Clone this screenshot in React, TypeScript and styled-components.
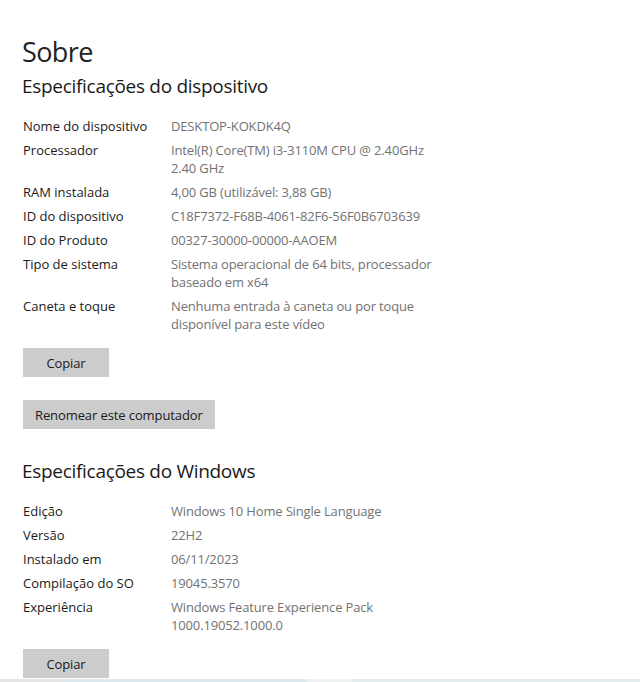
import * as React from "react";
import styled, { createGlobalStyle } from "styled-components";

const GlobalStyle = createGlobalStyle`
    html, body {
        margin: 0;
        padding: 0;
        background: #fff;
    }
    body {
        font-family: "Open Sans", "Noto Sans", "Liberation Sans", sans-serif;
        color: #1a1a1a;
    }
`;

const Page = styled.div`
    height: 682px;
    display: flex;
    flex-direction: column;
    overflow: hidden;
`;

const Content = styled.main`
    flex: 1;
    padding: 34px 0 0 22px;
`;

const Title = styled.h1`
    margin: 0;
    font-size: 27px;
    line-height: 36px;
    font-weight: 400;
    letter-spacing: -0.6px;
    color: #222;
`;

const SectionTitle = styled.h2<{ spacing: number }>`
    margin: ${props => props.spacing}px 0 0;
    font-size: 19px;
    line-height: 28px;
    font-weight: 400;
    letter-spacing: -0.3px;
    color: #1a1a1a;
`;

const SpecList = styled.dl`
    display: grid;
    grid-template-columns: 148px 1fr;
    row-gap: 6px;
    margin: 17px 0 0 1px;
    font-size: 13px;
    line-height: 18px;
`;

const Label = styled.dt`
    margin: 0;
    color: #1a1a1a;
`;

const Value = styled.dd`
    margin: 0;
    color: #727272;
    letter-spacing: -0.15px;
    max-width: 270px;
`;

const Button = styled.button<{ spacing: number }>`
    display: block;
    min-width: 86px;
    height: 29px;
    margin: ${props => props.spacing}px 0 0 1px;
    padding: 0 12px;
    border: none;
    background: #cccccc;
    color: #1a1a1a;
    font-family: inherit;
    font-size: 13px;
    letter-spacing: -0.1px;
    cursor: pointer;
`;

const Taskbar = styled.div`
    height: 3px;
    background: linear-gradient(90deg, #e4e6e6 0 10%, #dde9ec 10% 48%, #eef2f2 48% 55%, #e3ecee 55% 100%);
`;

type Spec = { label: string; value: string[] };

const device: Spec[] = [
    { label: "Nome do dispositivo", value: ["DESKTOP-KOKDK4Q"] },
    { label: "Processador", value: ["Intel(R) Core(TM) i3-3110M CPU @ 2.40GHz", "2.40 GHz"] },
    { label: "RAM instalada", value: ["4,00 GB (utilizável: 3,88 GB)"] },
    { label: "ID do dispositivo", value: ["C18F7372-F68B-4061-82F6-56F0B6703639"] },
    { label: "ID do Produto", value: ["00327-30000-00000-AAOEM"] },
    { label: "Tipo de sistema", value: ["Sistema operacional de 64 bits, processador", "baseado em x64"] },
    { label: "Caneta e toque", value: ["Nenhuma entrada à caneta ou por toque", "disponível para este vídeo"] },
];

const windows: Spec[] = [
    { label: "Edição", value: ["Windows 10 Home Single Language"] },
    { label: "Versão", value: ["22H2"] },
    { label: "Instalado em", value: ["06/11/2023"] },
    { label: "Compilação do SO", value: ["19045.3570"] },
    { label: "Experiência", value: ["Windows Feature Experience Pack", "1000.19052.1000.0"] },
];

const Specs = ({ items }: { items: Spec[] }) => (
    <SpecList>
        {items.map(item => (
            <React.Fragment key={item.label}>
                <Label>{item.label}</Label>
                <Value>
                    {item.value.map((line, i) => (
                        <React.Fragment key={i}>
                            {i > 0 && <br />}
                            {line}
                        </React.Fragment>
                    ))}
                </Value>
            </React.Fragment>
        ))}
    </SpecList>
);

export default function App() {
    return (
        <Page>
            <GlobalStyle />
            <Content>
                <Title>Sobre</Title>
                <SectionTitle spacing={2}>Especificações do dispositivo</SectionTitle>
                <Specs items={device} />
                <Button spacing={15}>Copiar</Button>
                <Button spacing={23}>Renomear este computador</Button>
                <SectionTitle spacing={28}>Especificações do Windows</SectionTitle>
                <Specs items={windows} />
                <Button spacing={15}>Copiar</Button>
            </Content>
            <Taskbar />
        </Page>
    );
}
